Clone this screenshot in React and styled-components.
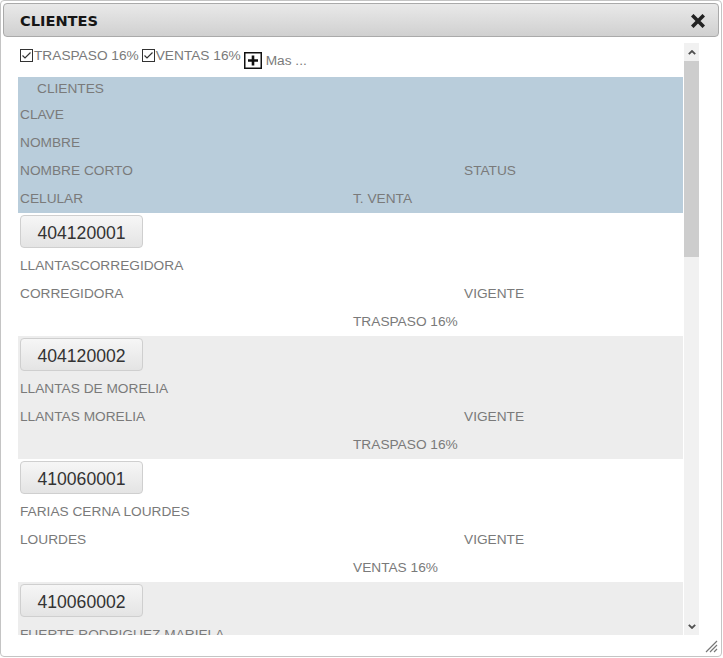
import React from 'react';
import styled, { createGlobalStyle } from 'styled-components';

const GlobalStyle = createGlobalStyle`
  html, body {
    margin: 0;
    padding: 0;
    background: #fff;
  }
  body {
    font-family: "Liberation Sans", Arial, sans-serif;
  }
`;

const Dialog = styled.div`
  box-sizing: border-box;
  width: 722px;
  height: 657px;
  border: 1px solid #c4c4c4;
  border-radius: 4px;
  padding: 2px;
  display: flex;
  flex-direction: column;
  background: #fff;
`;

const TitleBar = styled.div`
  box-sizing: border-box;
  height: 34px;
  border: 1px solid #aaa;
  border-radius: 4px;
  background: linear-gradient(#e9e9e9, #d0d0d0);
  display: flex;
  align-items: center;
  justify-content: space-between;
  padding: 0 13px 0 16px;
`;

const Title = styled.span`
  font-family: "DejaVu Sans", Verdana, sans-serif;
  font-weight: bold;
  font-size: 14.6px;
  color: #151515;
`;

const CloseButton = styled.span`
  display: flex;
  width: 14px;
  height: 14px;
  margin-top: 1px;
`;

const Body = styled.div`
  display: flex;
  margin-top: 6px;
  padding-left: 15px;
  height: 592px;
`;

const List = styled.div`
  width: 665px;
  overflow: hidden;
  font-size: 13.7px;
  color: #7a7a7a;
`;

const FilterRow = styled.div`
  height: 34px;
  display: flex;
  align-items: flex-start;
  padding-left: 2px;
`;

const Filter = styled.label`
  display: flex;
  align-items: center;
  margin-top: 5px;
  margin-right: 3px;
  line-height: 15px;
`;

const Box = styled.span`
  display: flex;
  width: 13px;
  height: 13px;
  margin-right: 1px;
`;

const More = styled.span`
  display: flex;
  align-items: center;
  margin-top: 9px;
  line-height: 15px;
`;

const PlusBox = styled.span`
  display: flex;
  width: 18px;
  height: 17px;
  margin-right: 4px;
`;

const Block = styled.div`
  background: ${p => p.bg};
  padding-bottom: ${p => p.pad || 0}px;
`;

const Line = styled.div`
  display: grid;
  grid-template-columns: 333px 111px 1fr;
  height: ${p => p.h || 28}px;
  align-items: center;
  padding-left: ${p => p.indent || 2}px;
  white-space: nowrap;
`;

const ButtonLine = styled.div`
  height: 38px;
  padding: 2px 0 0 2px;
  box-sizing: border-box;
`;

const KeyButton = styled.button`
  width: 123px;
  height: 33px;
  border: 1px solid #cfcfcf;
  border-radius: 4px;
  background: linear-gradient(#f6f6f6, #e4e4e4);
  font-family: "Liberation Sans", Arial, sans-serif;
  font-size: 17.6px;
  color: #333;
  padding: 3px 0 0;
  cursor: pointer;
`;

const ScrollBar = styled.div`
  width: 15px;
  margin-left: 1px;
  display: flex;
  flex-direction: column;
  background: #f1f1f1;
`;

const Arrow = styled.div`
  height: 18px;
  display: flex;
  align-items: center;
  justify-content: center;
`;

const Thumb = styled.div`
  height: 196px;
  background: #cdcdcd;
`;

const Track = styled.div`
  flex: 1;
`;

const Footer = styled.div`
  flex: 1;
  display: flex;
  justify-content: flex-end;
  align-items: center;
  padding-right: 1px;
`;

const Check = () => (
  <svg width="13" height="13" viewBox="0 0 13 13">
    <rect x="0.5" y="0.5" width="12" height="12" fill="#fff" stroke="#333" />
    <path d="M2.5 6.5 L5 9 L10.5 3.5" fill="none" stroke="#333" strokeWidth="1.2" />
  </svg>
);

const Plus = () => (
  <svg width="18" height="17" viewBox="0 0 18 17">
    <rect x="0.75" y="0.75" width="16.5" height="15.5" fill="#fff" stroke="#111" strokeWidth="1.5" />
    <path d="M9 3.5 V13.5 M4 8.5 H14" stroke="#111" strokeWidth="2.6" />
  </svg>
);

const Chevron = ({ down }) => (
  <svg width="8" height="5" viewBox="0 0 8 5">
    <path d={down ? 'M0.8 0.8 L4 4 L7.2 0.8' : 'M0.8 4.2 L4 1 L7.2 4.2'} fill="none" stroke="#505050" strokeWidth="1.8" />
  </svg>
);

const clients = [
  { clave: '404120001', nombre: 'LLANTASCORREGIDORA', corto: 'CORREGIDORA', status: 'VIGENTE', venta: 'TRASPASO 16%' },
  { clave: '404120002', nombre: 'LLANTAS DE MORELIA', corto: 'LLANTAS MORELIA', status: 'VIGENTE', venta: 'TRASPASO 16%' },
  { clave: '410060001', nombre: 'FARIAS CERNA LOURDES', corto: 'LOURDES', status: 'VIGENTE', venta: 'VENTAS 16%' },
  { clave: '410060002', nombre: 'FUERTE RODRIGUEZ MARIELA', corto: 'MARIELA', status: 'VIGENTE', venta: 'VENTAS 16%' },
];

export default function App() {
  return (
    <>
      <GlobalStyle />
      <Dialog>
        <TitleBar>
          <Title>CLIENTES</Title>
          <CloseButton>
            <svg width="14" height="14" viewBox="0 0 14 14">
              <path d="M2.5 2.5 L11.5 11.5 M11.5 2.5 L2.5 11.5" stroke="#222" strokeWidth="3.6" strokeLinecap="square" />
            </svg>
          </CloseButton>
        </TitleBar>
        <Body>
          <List>
            <FilterRow>
              <Filter><Box><Check /></Box>TRASPASO 16%</Filter>
              <Filter><Box><Check /></Box>VENTAS 16%</Filter>
              <More><PlusBox><Plus /></PlusBox>Mas ...</More>
            </FilterRow>
            <Block bg="#b9cddb" pad={1}>
              <Line h={23} indent={19}>CLIENTES</Line>
              <Line>CLAVE</Line>
              <Line>NOMBRE</Line>
              <Line><span>NOMBRE CORTO</span><span /><span>STATUS</span></Line>
              <Line><span>CELULAR</span><span>T. VENTA</span></Line>
            </Block>
            {clients.map((c, i) => (
              <Block key={c.clave} bg={i % 2 ? '#ededed' : '#fff'} pad={1}>
                <ButtonLine><KeyButton>{c.clave}</KeyButton></ButtonLine>
                <Line>{c.nombre}</Line>
                <Line><span>{c.corto}</span><span /><span>{c.status}</span></Line>
                <Line><span /><span>{c.venta}</span></Line>
              </Block>
            ))}
          </List>
          <ScrollBar>
            <Arrow><Chevron /></Arrow>
            <Thumb />
            <Track />
            <Arrow><Chevron down /></Arrow>
          </ScrollBar>
        </Body>
        <Footer>
          <svg width="16" height="16" viewBox="0 0 16 16">
            <path d="M15 4 L4 15 M15 8 L8 15 M15 12 L12 15" stroke="#777" strokeWidth="1.2" />
          </svg>
        </Footer>
      </Dialog>
    </>
  );
}
